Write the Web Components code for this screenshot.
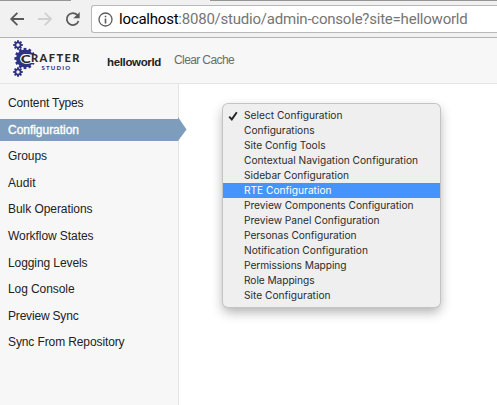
<!DOCTYPE html>
<html lang="en"><head><meta charset="utf-8"><title>Crafter Studio</title>
<style>html,body{margin:0;height:100%;overflow:hidden;background:#fff}</style></head><body>
<studio-window></studio-window>
<script>
class FitText extends HTMLElement{
 connectedCallback(){
  const r=this.attachShadow({mode:'open'});
  r.innerHTML='<style>:host{display:inline-block;white-space:pre}span{display:inline-block;white-space:pre}</style><span><slot></slot></span>';
  const s=r.querySelector('span'),w=+this.getAttribute('width');
  s.style.letterSpacing=((w-s.getBoundingClientRect().width)/this.textContent.length)+'px';
 }
}
class BrowserBar extends HTMLElement{
 connectedCallback(){
  this.attachShadow({mode:'open'}).innerHTML=`<style>
:host{display:flex;box-sizing:border-box;height:38px;padding-top:5px;background:linear-gradient(90deg,#979597 71px,#f2f1f2 71px 210px,#979597 210px) 0 0/100% 1px no-repeat #f2f1f2;border-bottom:1px solid #b3b2b3}
svg{display:block;flex:none}
.nav{width:91px;height:27px}
.box{box-sizing:border-box;flex:1;height:28px;border:1px solid #b9b8b9;border-right:0;border-radius:3px 0 0 3px;background:#fff;display:flex;align-items:center;font:15px/20px Roboto,sans-serif;color:#757575}
.box svg{margin:0 6px 0 6px}
b{font-weight:400;color:#000}
</style>
<svg class="nav" viewBox="0 0 91 27" fill="none" stroke="#5a5a5a" stroke-width="1.8"><path d="M24 14H11.5M17.4 7.8 11.2 14l6.2 6.2"/><path stroke="#d0d0d0" d="M38 14h12.500M44.800 7.800 51 14l-6.200 6.200"/><path d="M77.400 10.200A6 6 0 1 0 78.500 16"/><path d="M79.700 7v6.300h-6.300z" fill="#5a5a5a" stroke="none"/></svg>
<div class="box"><svg width="15" height="15" viewBox="0 0 15 15"><circle cx="7.500" cy="7.500" r="6.500" fill="none" stroke="#5c5c5c" stroke-width="1.300"/><path d="M6.700 3.700h1.600v1.600H6.700zM6.700 6.500h1.600v4.900H6.700z" fill="#5c5c5c"/></svg><fit-text width="348.500"><b>localhost</b>:8080/studio/admin-console?site=helloworld</fit-text></div>`;
 }
}
class CrafterLogo extends HTMLElement{
 connectedCallback(){
  const gear=(x,y,r,n,sw,tooth,tw)=>{let t='';for(let i=0;i<n;i++)t+=`<path d="M${x} ${y-r}V${y-r-sw/2-tooth}" stroke-width="${tw}" transform="rotate(${i*360/n} ${x} ${y})"/>`;return `<g fill="none" stroke="#2f3187" stroke-width="${sw}"><circle cx="${x}" cy="${y}" r="${r}"/>${t}</g>`};
  this.attachShadow({mode:'open'}).innerHTML=`<style>:host{display:block;width:70px;height:40px}svg{display:block}text{font-family:Lato,sans-serif;font-weight:900}</style>
<svg width="70" height="40" viewBox="12 38 70 40">${gear(18,45,2.6,8,1.8,1.3,1.9)}${gear(18,72,2.6,8,1.8,1.3,1.9)}${gear(25,58.5,6.8,12,4.4,1.6,2.8)}
<path d="M26.500 54.500H36V63H26.500Z" fill="#f7f7f7"/>
<text x="20.800" y="62.500" font-size="11.800" textLength="10" lengthAdjust="spacingAndGlyphs" fill="#2c2b29" stroke="#f7f7f7" stroke-width="1.600" paint-order="stroke">C</text>
<text x="31" y="62" font-size="11" textLength="48.500" fill="#2c2b29">RAFTER</text>
<text x="41.500" y="70.400" font-size="6" textLength="28.500" fill="#34368a">STUDIO</text></svg>`;
 }
}
class StudioHeader extends HTMLElement{
 connectedCallback(){
  this.attachShadow({mode:'open'}).innerHTML=`<style>:host{display:flex;box-sizing:border-box;height:46px;background:#f7f7f7;border-bottom:1px solid #e4e4e4;padding-left:12px;font:12px/16px "Liberation Sans",Arial,sans-serif}
.site{margin:16px 0 0 25px;font-weight:700;font-size:11.500px;color:#222}.cache{margin:14px 0 0 13px;color:#6c6c6c}</style>
<crafter-logo></crafter-logo><fit-text class="site" width="54">helloworld</fit-text><fit-text class="cache" width="60">Clear Cache</fit-text>`;
 }
}
class SideNav extends HTMLElement{
 connectedCallback(){
  const items=[['Content Types',75.500],['Configuration',71],['Groups',39],['Audit',27.500],['Bulk Operations',84.500],['Workflow States',85.500],['Logging Levels',79.500],['Log Console',66.500],['Preview Sync',70.500],['Sync From Repository',116.500]];
  this.attachShadow({mode:'open'}).innerHTML=`<style>:host{display:block;box-sizing:border-box;width:179px;background:#f7f7f7;border-right:1px solid #e2e2e2;padding-top:8.300px;font:12px/22px "Liberation Sans",Arial,sans-serif;color:#222}
div{position:relative;height:22px;padding-left:8px;margin-bottom:4.550px}
.on{background:#7e9dbd;color:#fff;-webkit-text-stroke:.35px #fff}
svg{position:absolute;left:178px;top:-2px}</style>`+items.map(([t,w],i)=>`<div class="${i==1?'on':''}"><fit-text width="${w}">${t}</fit-text>${i==1?'<svg width="9" height="26"><path d="M0 0L8.500 12.500L0 24Z" fill="#7e9dbd"/></svg>':''}</div>`).join('');
 }
}
class ConfigMenu extends HTMLElement{
 connectedCallback(){
  const items=[['Select Configuration',98.500],['Configurations',70.500],['Site Config Tools',81.500],['Contextual Navigation Configuration',174],['Sidebar Configuration',105],['RTE Configuration',87.500],['Preview Components Configuration',169.500],['Preview Panel Configuration',135.500],['Personas Configuration',112.500],['Notification Configuration',124],['Permissions Mapping',102.500],['Role Mappings',70.500],['Site Configuration',86.500]];
  this.attachShadow({mode:'open'}).innerHTML=`<style>:host{display:block;box-sizing:border-box;width:217px;height:203px;padding-top:4px;border-radius:5px;background:#efefef;box-shadow:0 0 0 1px #c3c5c5,0 5px 12px rgba(0,0,0,.32);font:10.200px/15px Inter,sans-serif;color:#2c2c2c}
div{position:relative;height:15px;padding-left:21px}.on{background:#4594fc;color:#fff}
svg{position:absolute;left:5px;top:3px}</style>`+items.map(([t,w],i)=>`<div class="${i==5?'on':''}">${i==0?'<svg width="11" height="10"><path d="M1.200 5.700 3.800 8.400 8.800 1.200" fill="none" stroke="#252525" stroke-width="1.900"/></svg>':''}<fit-text width="${w}">${t}</fit-text></div>`).join('');
 }
}
class StudioWindow extends HTMLElement{
 connectedCallback(){
  this.attachShadow({mode:'open'}).innerHTML=`<style>:host{display:flex;flex-direction:column;width:497px;height:405px;background:#fff}
.body{flex:1;display:flex}main{flex:1;padding:20px 0 0 44px}</style>
<browser-bar></browser-bar><studio-header></studio-header><div class="body"><side-nav></side-nav><main><config-menu></config-menu></main></div>`;
 }
}
customElements.define('fit-text',FitText);
customElements.define('browser-bar',BrowserBar);
customElements.define('crafter-logo',CrafterLogo);
customElements.define('studio-header',StudioHeader);
customElements.define('side-nav',SideNav);
customElements.define('config-menu',ConfigMenu);
customElements.define('studio-window',StudioWindow);
</script></body></html>
